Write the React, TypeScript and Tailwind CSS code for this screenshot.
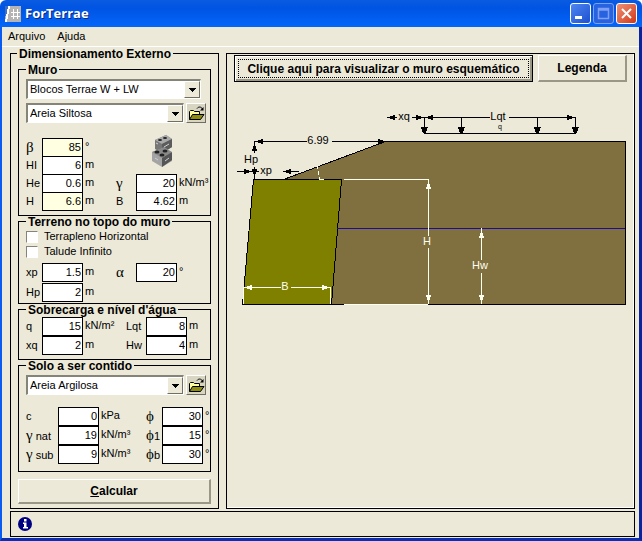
import React, { useState } from "react";

type FieldProps = {
  id: string;
  label: React.ReactNode;
  value: string;
  unit: string;
  labelWidth?: string;
  readOnly?: boolean;
};

const Field = ({ id, label, value, unit, labelWidth = "w-4", readOnly }: FieldProps) => {
  const [text, setText] = useState(value);
  return (
    <div className="flex h-[19px]">
      <label htmlFor={id} className={`${labelWidth} shrink-0 whitespace-nowrap leading-[19px]`}>{label}</label>
      <input
        id={id}
        type="text"
        readOnly={readOnly}
        value={text}
        onChange={(e) => setText(e.target.value)}
        className={`w-[41px] shrink-0 border border-black px-px text-right outline-none ${readOnly ? "bg-[#ffffe1]" : "bg-white"}`}
      />
      <span className="ml-[2px] whitespace-nowrap leading-4">{unit}</span>
    </div>
  );
};

const Greek = ({ children }: { children: React.ReactNode }) => (
  <span className="font-['Liberation_Serif',serif] text-[15px]">{children}</span>
);

const Group = ({ title, className, children }: { title: string; className: string; children: React.ReactNode }) => (
  <fieldset className={`min-w-0 border border-black ${className}`}>
    <legend className="ml-[7px] px-[2px] pt-[2px] text-[12px] font-bold leading-[9px]">{title}</legend>
    {children}
  </fieldset>
);

const Combo = ({ label, options, className }: { label: string; options: string[]; className: string }) => (
  <div className={`relative h-5 ${className}`}>
    <select
      aria-label={label}
      className="h-full w-full appearance-none border-2 border-b border-r border-b-white border-l-[#848478] border-r-white border-t-[#848478] bg-white pl-[2px] pr-5 outline-none"
    >
      {options.map((o) => <option key={o}>{o}</option>)}
    </select>
    <span className="pointer-events-none absolute bottom-px right-px top-[2px] flex w-4 items-center justify-center border border-b-[#716f64] border-l-white border-r-[#716f64] border-t-white bg-[#ece9d8]">
      <svg width="7" height="4" viewBox="0 0 7 4" shapeRendering="crispEdges"><path d="M0 0h7L3.5 4z" /></svg>
    </span>
  </div>
);

const OpenButton = () => (
  <button
    type="button"
    aria-label="Abrir"
    className="flex size-5 shrink-0 items-center justify-center border border-b-[#716f64] border-l-white border-r-[#716f64] border-t-white bg-[#d9d5c3]"
  >
    <svg width="17" height="15" viewBox="0 0 17 15">
      <path d="M1.5 13.5v-8l1-1h3l1 1h5v3" fill="#ffff9c" stroke="#000" />
      <path d="M1.5 13.5l3-5h11.5l-3.5 5z" fill="#8c8c10" stroke="#000" />
      <path d="M9 2.5c1.5-2 4-2 5.5.5" fill="none" stroke="#000" />
      <path d="M15.5 1v3.5h-3.5z" />
    </svg>
  </button>
);

const Blocks = () => (
  <svg width="23" height="33" viewBox="0 0 23 33">
    <path d="M4 6l11-5 6 4v8l-10 6-7-4z" fill="#777" />
    <path d="M4 6l11-5 6 4-10 5z" fill="#aaa" />
    <path d="M11 10l10-5v8l-10 6z" fill="#5c5c5c" />
    <path d="M1 18l12-4 8 5v8l-10 6-10-6z" fill="#a4a4a4" />
    <path d="M1 18l12-5 8 5-10 6z" fill="#8a8a8a" />
    <path d="M11 24l10-6v8l-10 7z" fill="#555" />
    <g fill="#222">
      <ellipse cx="9" cy="6" rx="2" ry="1" />
      <ellipse cx="14" cy="4" rx="2" ry="1" />
      <ellipse cx="6" cy="18" rx="2.5" ry="1.5" />
      <ellipse cx="14" cy="17" rx="2.5" ry="1.5" />
      <ellipse cx="11" cy="21" rx="2.5" ry="1.5" />
    </g>
    <path d="M5 9l2 1M13 13l5-3M4 24l3 2M14 27l4-3" stroke="#d0d0d0" />
  </svg>
);

// arrow head with its tip at x, y
const Head = ({ x, y, dir }: { x: number; y: number; dir: "l" | "r" | "u" | "d" }) => {
  const shapes = {
    l: "l8 -2.5v5z",
    r: "l-8 -2.5v5z",
    u: "l-2.5 8h5z",
    d: "l-2.5 -8h5z",
  };
  return <path d={`M${x} ${y}${shapes[dir]}`} stroke="none" />;
};

const Diagram = () => (
  <svg
    viewBox="227 82 407 240"
    className="block h-auto w-full font-['Liberation_Sans',Arial,sans-serif] text-[11px]"
    role="img"
    aria-label="Muro"
  >
    <g shapeRendering="crispEdges" strokeWidth="1">
      <path d="M283.5 179.5L385.5 141.5H625.5V304.5H331.5L341.5 179.5z" fill="#806f3f" stroke="#000" />
      <path d="M253.5 179.5H341.5L331.5 304.5H242.5z" fill="#808000" stroke="#000" />
      <path d="M337 228.5H625" stroke="#1c0c98" />
      <g stroke="#000" fill="#000">
        <path d="M254 141.5H307M332 141.5H386M254.5 141V153M254.5 167V180M237 171.5H259M284 171.5H299" />
        <path d="M387 117.5H397M412 117.5H490M509 117.5H576M424 133.5H576" />
        <path d="M424.5 117V133M461.5 117V133M537.5 117V133M575.5 117V133" />
        <Head x={255} y={141.5} dir="l" />
        <Head x={386} y={141.5} dir="r" />
        <Head x={254.5} y={143} dir="u" />
        <Head x={254.5} y={177} dir="d" />
        <Head x={252} y={171.5} dir="r" />
        <Head x={283} y={171.5} dir="l" />
        <Head x={387} y={117.5} dir="l" />
        <Head x={424} y={117.5} dir="r" />
        <Head x={425} y={117.5} dir="l" />
        <Head x={575} y={117.5} dir="r" />
      </g>
      <path d="M421 127h7l-2 6h-3zM458 127h7l-2 6h-3zM534 127h7l-2 6h-3zM572 127h7l-2 6h-3z" />
      <g stroke="#fffff0" fill="#fffff0">
        <path d="M344 179.5H429M428.5 179V236M428.5 248V304M344 304.5H428" />
        <path d="M481.5 228V260M481.5 273V304" />
        <path d="M243 287.5H281M291 287.5H331M243.5 287V304M330.5 287V304" />
        <path d="M317.5 166V169M318.5 171V175M319.5 177V180M319 179.5H324" />
        <Head x={428.5} y={181} dir="u" />
        <Head x={428.5} y={303} dir="d" />
        <Head x={481.5} y={230} dir="u" />
        <Head x={481.5} y={303} dir="d" />
        <Head x={244} y={287.5} dir="l" />
        <Head x={330} y={287.5} dir="r" />
      </g>
    </g>
    <g textAnchor="middle">
      <text x="318" y="144">6.99</text>
      <text x="251" y="163">Hp</text>
      <text x="266" y="174">xp</text>
      <text x="404" y="120">xq</text>
      <text x="498" y="120">Lqt</text>
      <text x="500" y="129" className="text-[7px]">q</text>
      <g fill="#fffff0">
        <text x="427" y="245">H</text>
        <text x="480" y="269">Hw</text>
        <text x="285" y="290">B</text>
      </g>
    </g>
  </svg>
);

const caption = "flex size-[21px] items-center justify-center rounded-[3px] border border-white";

const App = () => (
  <div className="flex min-h-screen w-full flex-col bg-white font-['Liberation_Sans',Arial,sans-serif] text-[11px] text-black">
    <header className="flex h-[27px] items-center rounded-t-md bg-linear-to-b from-[#0a5be0] via-[#0054e3] via-30% to-[#0466fb] pl-[5px] pr-[5px]">
      <svg width="16" height="16" viewBox="0 0 16 16" shapeRendering="crispEdges">
        <path d="M0 0h16v16H0z" fill="#b4b4b4" />
        <path d="M0 0h3v10H0z" fill="#3d6fc4" />
        <path d="M4 0L1 16" stroke="#fff" strokeWidth="2" />
        <path d="M8.5 3v10M12.5 3v10M6 6.5h9M6 10.5h9" stroke="#fff" strokeWidth="1.5" />
      </svg>
      <h1 className="ml-1 flex-1 font-['Open_Sans',sans-serif] text-[13px] font-bold text-white [text-shadow:1px_1px_#0a2a80]">ForTerrae</h1>
      <div className="flex gap-[2px]">
        <button type="button" aria-label="Minimizar" className={`${caption} bg-linear-to-br from-[#4f86f0] to-[#1d4fd0]`}>
          <svg width="13" height="13" viewBox="0 0 13 13"><path d="M1 9h7v3H1z" fill="#fff" /></svg>
        </button>
        <button type="button" aria-label="Maximizar" disabled className="flex size-[21px] items-center justify-center rounded-[3px] border border-[#7aa0f0] bg-[#2762e0]">
          <svg width="13" height="13" viewBox="0 0 13 13"><path d="M1.5 1.5h10v10h-10zM1 3h11" fill="none" stroke="#7f9ff0" strokeWidth="1.5" /></svg>
        </button>
        <button type="button" aria-label="Fechar" className={`${caption} bg-linear-to-br from-[#ee8f72] to-[#cf3510]`}>
          <svg width="13" height="13" viewBox="0 0 13 13"><path d="M2 2l9 9M11 2l-9 9" stroke="#fff" strokeWidth="2" /></svg>
        </button>
      </div>
    </header>

    <div className="flex flex-1 flex-col border-b-[3px] border-l-2 border-r-[3px] border-b-[#0a2fb4] border-l-[#0a5cf0] border-r-[#0a24a0] bg-[#ece9d8]">
      <nav className="flex h-5 items-center gap-3 border-b border-white pl-[6px]">
        <a href="#arquivo">Arquivo</a>
        <a href="#ajuda">Ajuda</a>
      </nav>

      <main className="flex flex-1 gap-[7px] pl-2 pr-1 pt-px">
        <Group title="Dimensionamento Externo" className="w-[209px] shrink-0 px-[7px] pb-1 [&>legend]:-ml-px">
          <div className="pt-[5px]">
            <Group title="Muro" className="pb-1 [&>legend]:ml-[7px]">
              <div className="pl-[7px] pt-1">
                <Combo label="Bloco" options={["Blocos Terrae W + LW"]} className="w-[175px]" />
                <div className="mt-1 flex items-center gap-[2px]">
                  <Combo label="Solo do muro" options={["Areia Siltosa"]} className="w-[158px]" />
                  <OpenButton />
                </div>
                <div className="mt-[11px] flex">
                  <div className="w-[90px] -space-y-px pt-1">
                    <Field id="beta" label={<Greek>β</Greek>} value="85" unit="°" readOnly />
                    <Field id="hi" label="HI" value="6" unit="m" />
                    <Field id="he" label="He" value="0.6" unit="m" />
                    <Field id="h" label="H" value="6.6" unit="m" readOnly />
                  </div>
                  <div className="-space-y-px">
                    <div className="flex h-[41px] justify-center"><Blocks /></div>
                    <Field id="gama" label={<Greek>γ</Greek>} value="20" unit="kN/m³" labelWidth="w-5" />
                    <Field id="b" label="B" value="4.62" unit="m" labelWidth="w-5" />
                  </div>
                </div>
              </div>
            </Group>

            <Group title="Terreno no topo do muro" className="pb-px [&>legend]:ml-[7px]">
              <div className="pl-[7px] pt-[2px]">
                {["Terrapleno Horizontal", "Talude Infinito"].map((t) => (
                  <label key={t} className="flex h-[15px] items-center gap-[6px]">
                    <input type="checkbox" className="size-3 appearance-none border border-b-white border-l-[#848478] border-r-white border-t-[#848478] bg-white checked:bg-black" />
                    {t}
                  </label>
                ))}
                <div className="mt-1 flex">
                  <div className="w-[90px] space-y-px">
                    <Field id="xp" label="xp" value="1.5" unit="m" />
                    <Field id="hp" label="Hp" value="2" unit="m" />
                  </div>
                  <Field id="alfa" label={<Greek>α</Greek>} value="20" unit="°" labelWidth="w-5" />
                </div>
              </div>
            </Group>

            <Group title="Sobrecarga e nível d'água" className="pb-1 [&>legend]:ml-[7px]">
              <div className="flex pl-[7px] pt-[2px]">
                <div className="w-[100px]">
                  <Field id="q" label="q" value="15" unit="kN/m²" />
                  <Field id="xq" label="xq" value="2" unit="m" />
                </div>
                <div>
                  <Field id="lqt" label="Lqt" value="8" unit="m" labelWidth="w-5" />
                  <Field id="hw" label="Hw" value="4" unit="m" labelWidth="w-5" />
                </div>
              </div>
            </Group>

            <Group title="Solo a ser contido" className="pb-[7px] [&>legend]:ml-[7px]">
              <div className="pl-[7px] pt-1">
                <div className="flex items-center gap-[2px]">
                  <Combo label="Solo contido" options={["Areia Argilosa"]} className="w-[158px]" />
                  <OpenButton />
                </div>
                <div className="mt-3 flex">
                  <div className="w-[120px]">
                    <Field id="c" label="c" value="0" unit="kPa" labelWidth="w-8" />
                    <Field id="gnat" label={<><Greek>γ</Greek> nat</>} value="19" unit="kN/m³" labelWidth="w-8" />
                    <Field id="gsub" label={<><Greek>γ</Greek> sub</>} value="9" unit="kN/m³" labelWidth="w-8" />
                  </div>
                  <div>
                    <Field id="phi" label={<Greek>ϕ</Greek>} value="30" unit="°" />
                    <Field id="phi1" label={<><Greek>ϕ</Greek>1</>} value="15" unit="°" />
                    <Field id="phib" label={<><Greek>ϕ</Greek>b</>} value="30" unit="°" />
                  </div>
                </div>
              </div>
            </Group>

            <button type="button" className="mt-[7px] h-[25px] w-full border-2 border-l border-t border-b-[#9a9786] border-l-white border-r-[#9a9786] border-t-white text-[12px] font-bold">
              <span className="underline">C</span>alcular
            </button>
          </div>
        </Group>

        <section className="mt-[5px] min-w-0 flex-1 border border-black pt-px shadow-[inset_-1px_-1px_#fff]">
          <div className="flex gap-[5px] px-[7px] text-[12px]">
            <button type="button" className="h-[27px] min-w-0 flex-1 border border-black p-px font-bold shadow-[inset_1px_1px_#fff,inset_-2px_-2px_#9a9786]">
              <span className="m-[2px] flex h-[19px] items-center justify-center border border-dotted border-black">
                Clique aqui para visualizar o muro esquemático
              </span>
            </button>
            <button type="button" className="h-[27px] w-[89px] shrink-0 border-2 border-l border-t border-b-[#9a9786] border-l-white border-r-[#9a9786] border-t-white font-bold">
              Legenda
            </button>
          </div>
          <Diagram />
        </section>
      </main>

      <footer className="mb-px ml-2 mr-1 mt-[2px] flex h-[26px] items-center border border-black pl-[7px]">
        <svg width="14" height="14" viewBox="0 0 14 14" role="img" aria-label="Informação">
          <circle cx="7" cy="7" r="7" fill="#000080" />
          <path d="M6 2h2.5v2.5H6zM5 5.5h3.5V10H10v1.5H5V10h1V7H5z" fill="#fff" />
        </svg>
      </footer>
    </div>
  </div>
);

export default App;
